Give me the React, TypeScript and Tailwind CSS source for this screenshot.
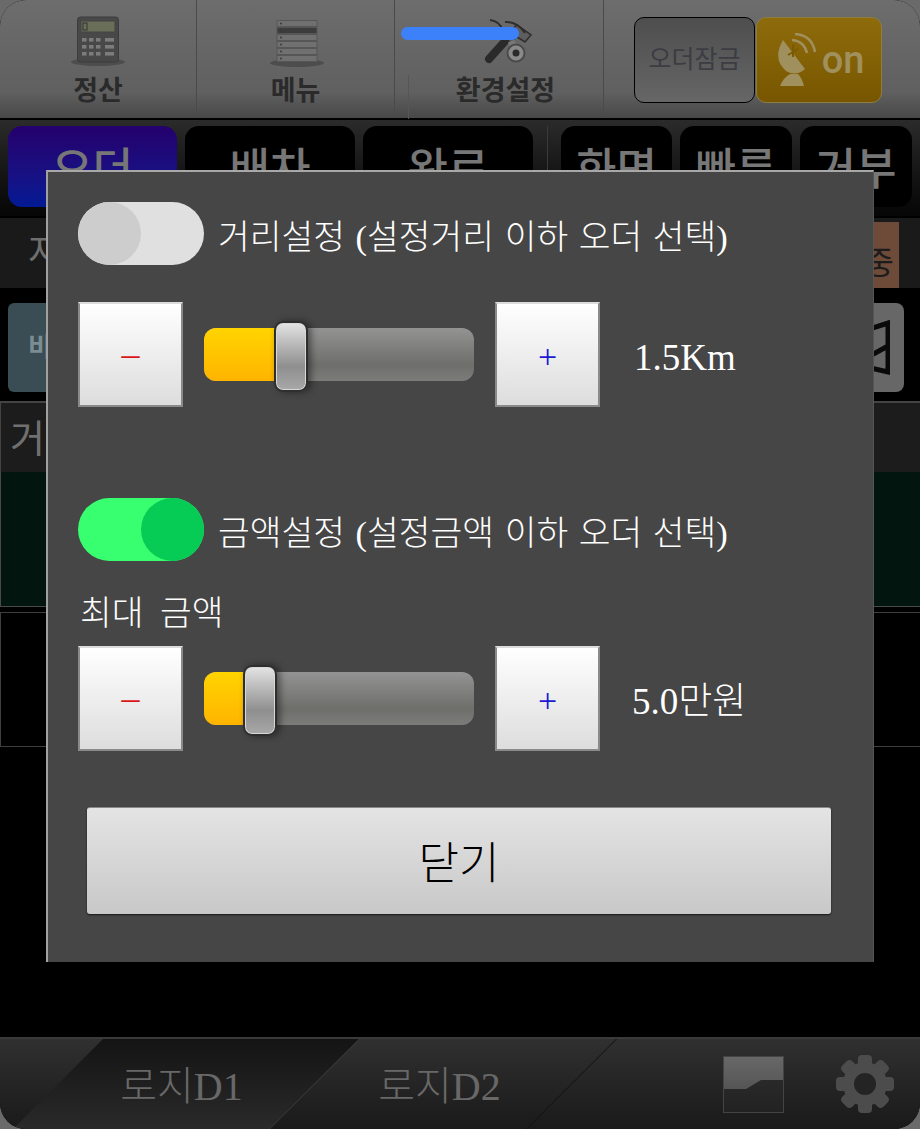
const serif = "font-['Liberation_Serif','Noto_Sans_CJK_KR',serif]"

function CalculatorIcon() {
  return (
    <svg width="80" height="60" viewBox="0 0 80 60">
      <ellipse cx="40" cy="49" rx="27" ry="4" fill="#3e3e3e" opacity="0.6" />
      <rect x="19.5" y="4" width="41" height="45" rx="3" fill="#484848" stroke="#3c3c3c" />
      <rect x="23" y="8" width="34" height="11" fill="#6a6f5a" stroke="#444" />
      <rect x="25" y="10" width="4" height="7" fill="none" stroke="#333" />
      {[0, 1, 2].map((r) =>
        [0, 1, 2].map((c) => <rect key={`${r}-${c}`} x={24 + c * 7} y={25 + r * 7} width="4.5" height="3.6" fill="#7c7c7c" />),
      )}
      {[0, 1, 2].map((r) => (
        <rect key={r} x="47" y={25 + r * 7} width="9" height="3.6" fill="#7c7c7c" />
      ))}
    </svg>
  )
}

function MenuIcon() {
  return (
    <svg width="80" height="60" viewBox="0 0 80 60">
      <ellipse cx="41" cy="50" rx="27" ry="4" fill="#3e3e3e" opacity="0.6" />
      {[0, 1, 2, 3, 4, 5].map((i) => (
        <g key={i}>
          <rect x="21" y={7.5 + i * 7} width="40" height="6" fill={i === 1 ? "#3c3c3c" : "#707070"} stroke="#565656" />
          <circle cx="25" cy={10.5 + i * 7} r="1" fill="#3a3a3a" />
        </g>
      ))}
    </svg>
  )
}

function ToolsIcon() {
  return (
    <svg width="70" height="60" viewBox="0 0 70 60">
      <path d="M18 46 L36 26" stroke="#2a2a2a" strokeWidth="8" strokeLinecap="round" />
      <path d="M34 22 L46 12 L60 22 L54 29 L46 24 L39 30 Z" fill="#5e5e5e" stroke="#2e2e2e" strokeWidth="1.5" />
      <path d="M19 7 Q29 8 32 18" fill="none" stroke="#2e2e2e" strokeWidth="2" />
      <path d="M34 9 Q46 8 54 20" fill="none" stroke="#2e2e2e" strokeWidth="2" />
      <path d="M40 28 L45 38" stroke="#777" strokeWidth="7" />
      <circle cx="45" cy="40" r="8.5" fill="#8a8a8a" stroke="#4a4a4a" strokeWidth="2" />
      <circle cx="45" cy="40" r="3.5" fill="#2a2a2a" />
    </svg>
  )
}

function DishIcon() {
  return (
    <svg width="44" height="54" viewBox="0 0 44 54">
      <path d="M9 7 Q-2 26 12 38 Q22 44 31 36 Z" fill="#a0905e" />
      <path d="M14 22 L24 16 M19 11 L19 24" stroke="#7c5a00" strokeWidth="2" />
      <path d="M18 7 Q30 8 33 20 M21 1 Q38 2 41 19" fill="none" stroke="#a0905e" strokeWidth="2.5" />
      <path d="M6 53 Q10 44 16 41 L24 41 Q28 45 30 53 Z" fill="#a0905e" />
    </svg>
  )
}

function GearIcon() {
  return (
    <svg width="60" height="58" viewBox="0 0 60 58">
      {[0, 45, 90, 135, 180, 225, 270, 315].map((a) => (
        <rect key={a} x="23" y="0" width="14" height="14" rx="4" fill="#4c4c4c" transform={`rotate(${a} 30 29)`} />
      ))}
      <circle cx="30" cy="29" r="22" fill="#4c4c4c" />
      <circle cx="30" cy="29" r="11" fill="#242424" />
    </svg>
  )
}

function ChartIcon() {
  return (
    <svg width="61" height="57" viewBox="0 0 61 57">
      <defs>
        <linearGradient id="chartTop" x1="0" y1="0" x2="0" y2="1">
          <stop offset="0" stopColor="#686868" />
          <stop offset="1" stopColor="#555555" />
        </linearGradient>
        <linearGradient id="chartBottom" x1="0" y1="0" x2="0" y2="1">
          <stop offset="0" stopColor="#2e2e2e" />
          <stop offset="1" stopColor="#222222" />
        </linearGradient>
      </defs>
      <rect x="0.5" y="0.5" width="60" height="56" fill="url(#chartBottom)" stroke="#444" />
      <path d="M1 1 H60 V24 H38 L23 33 H1 Z" fill="url(#chartTop)" />
    </svg>
  )
}

function TopItem({ label, className, children }: { label: string; className: string; children: React.ReactNode }) {
  return (
    <div className={`flex h-full flex-col items-center border-r border-[#4a4a4a] pt-[13px] ${className}`}>
      <div className="h-[60px]">{children}</div>
      <span className="font-['Noto_Sans_CJK_KR',sans-serif] text-[27px] leading-[32px] font-bold text-[#2a2a2a]">{label}</span>
    </div>
  )
}

function TopTab({ label, className }: { label: string; className: string }) {
  return (
    <div className={`flex h-[81px] justify-center overflow-hidden rounded-[14px] pt-[15px] text-[44px] leading-[60px] font-medium whitespace-nowrap text-[#777] ${serif} ${className}`}>
      {label}
    </div>
  )
}

function StepButton({ kind }: { kind: "minus" | "plus" }) {
  return (
    <div className={`flex h-[105px] w-[105px] shrink-0 items-center justify-center border-2 border-[#8a8a8a] border-t-[#dcdcdc] bg-gradient-to-b from-white to-[#dddddd] ${serif} ${kind === "minus" ? "pb-[2px] text-[36px] text-[#d81818]" : "pt-[4px] text-[34px] text-[#1a1ad0]"}`}>
      {kind === "minus" ? "–" : "+"}
    </div>
  )
}

function Slider({ fill, thumb }: { fill: string; thumb: string }) {
  return (
    <div className="relative h-[53px] w-[270px] shrink-0 rounded-[12px] bg-gradient-to-b from-[#939393] via-[#6e6f6b] via-[70%] to-[#7c7c7a]">
      <div className={`h-full rounded-l-[12px] bg-gradient-to-b from-[#ffd400] to-[#ffb400] ${fill}`} />
      <div className={`absolute top-[-7px] h-[71px] w-[34px] rounded-[9px] border-2 border-[#2e2e2e] bg-gradient-to-b from-[#e4e4e4] via-[#8f8f8f] via-[65%] to-[#a8a8a8] shadow-[inset_0_0_0_1px_#d8d8d8,3px_0_7px_rgba(0,0,0,0.45)] ${thumb}`} />
    </div>
  )
}

function Toggle({ on, label }: { on: boolean; label: string }) {
  return (
    <div className="flex items-center gap-[14px]">
      <div className={`flex h-[63px] w-[126px] shrink-0 rounded-full ${on ? "justify-end bg-[#38ff70]" : "bg-[#e0e0e0]"}`}>
        <div className={`h-[63px] w-[63px] rounded-full ${on ? "bg-[#06cc55]" : "bg-[#cdcdcd]"}`} />
      </div>
      <span className={`pt-[6px] text-[34.5px] leading-[44px] font-light whitespace-nowrap text-white [word-spacing:2px] ${serif}`}>{label}</span>
    </div>
  )
}

function StepRow({ fill, thumb, value, className, valueClass }: { fill: string; thumb: string; value: string; className: string; valueClass: string }) {
  return (
    <div className={`flex items-center ${className}`}>
      <StepButton kind="minus" />
      <div className="mx-[21px]">
        <Slider fill={fill} thumb={thumb} />
      </div>
      <StepButton kind="plus" />
      <span className={`pt-[6px] text-[37px] font-light whitespace-nowrap text-white ${serif} ${valueClass}`}>{value}</span>
    </div>
  )
}

export default function App() {
  return (
    <div className="relative h-[1129px] w-[920px] overflow-hidden bg-[#6a6a6a]">
      <div className="flex h-full flex-col overflow-hidden rounded-[26px] bg-black">
        {/* Top menu */}
        <div className="flex h-[120px] shrink-0 items-stretch border-b-2 border-black bg-gradient-to-b from-[#6d6d6d] via-[#606060] via-[78%] to-[#484848]">
          <TopItem label="정산" className="w-[197px]"><CalculatorIcon /></TopItem>
          <TopItem label="메뉴" className="w-[198px]"><MenuIcon /></TopItem>
          <TopItem label="환경설정" className="w-[209px] pl-[13px]"><ToolsIcon /></TopItem>
          <div className="flex items-start pt-[17px] pl-[30px]">
            <div className={`flex h-[86px] w-[121px] items-center justify-center rounded-[10px] border border-black bg-gradient-to-b from-[#4e4e4e] to-[#666] text-[25px] text-[#3c3c44] ${serif}`}>
              오더잠금
            </div>
            <div className="ml-[1px] flex h-[86px] w-[126px] items-center justify-center gap-[4px] rounded-[10px] border border-[#8e7c40] bg-gradient-to-b from-[#8e6c0c] to-[#785600]">
              <DishIcon />
              <span className="font-['Roboto',sans-serif] text-[38px] leading-none font-medium text-[#a0905e]">on</span>
            </div>
          </div>
        </div>

        {/* Tabs */}
        <div className="flex h-[96px] shrink-0 items-start bg-gradient-to-b from-[#2b2b2b] to-[#060606] pt-[6px] pl-[8px]">
          <TopTab label="오더" className="w-[169px] bg-gradient-to-b from-[#24006c] to-[#001a94]" />
          <TopTab label="배차" className="ml-[8px] w-[170px] bg-black" />
          <TopTab label="완료" className="ml-[8px] w-[170px] bg-black" />
          <div className="ml-[14px] h-[88px] w-px bg-[#3a3a3a]" />
          <TopTab label="화면" className="ml-[13px] w-[111px] bg-black" />
          <TopTab label="빠른" className="ml-[8px] w-[112px] bg-black" />
          <TopTab label="거부" className="ml-[8px] w-[112px] bg-black" />
        </div>

        {/* Filter row */}
        <div className="mt-[2px] flex h-[70px] shrink-0 items-center justify-between bg-[#1a1a1a] pl-[28px] pr-[21px]">
          <span className={`text-[36px] text-[#6e6e6e] ${serif}`}>저</span>
          <div className={`mt-[4px] flex h-[66px] w-[60px] items-end justify-end bg-[#6e4a38] pr-[5px] text-[32px] leading-[50px] text-[#1c1c1c] ${serif}`}>
            중
          </div>
        </div>

        {/* Action row */}
        <div className="mt-[15px] flex h-[89px] shrink-0 items-stretch justify-between px-[8px] pr-[16px]">
          <div className={`flex w-[120px] items-center rounded-[6px] bg-[#3a4c54] pl-[20px] text-[26px] font-bold text-[#7c8c92] ${serif}`}>
            비
          </div>
          <div className="flex w-[90px] items-center justify-end rounded-[8px] bg-[#676767] pr-[14px]">
            <svg width="24" height="56" viewBox="0 0 24 56" fill="none" stroke="#0a0a0a" strokeWidth="5">
              <path d="M0 10 L22 3 V52 L0 47 M22 26 L0 38" />
            </svg>
          </div>
        </div>

        {/* Order list */}
        <div className="mt-[9px] flex h-[71px] shrink-0 items-center border-t-2 border-l border-[#444] bg-[#1c1c1c] pt-[4px] pl-[9px]">
          <span className={`text-[38px] text-[#707070] ${serif}`}>거</span>
        </div>
        <div className="h-[135px] shrink-0 border-b border-l border-[#4a4a4a] bg-[#03150f]" />
        <div className="mt-[5px] h-[135px] shrink-0 border-y border-l border-[#3e3e3e] bg-black" />

        {/* Bottom tabs */}
        <div className="mt-auto flex h-[92px] shrink-0 items-stretch border-t-2 border-[#3a3a3a] bg-gradient-to-b from-[#303030] to-[#1a1a1a] pl-[58px]">
          <div className="relative flex w-[257px] items-center justify-center pt-[6px] pr-[10px]">
            <div className="absolute inset-0 -skew-x-[45deg] border-r border-[#3c3c3c] bg-gradient-to-b from-[#141414] to-[#2a2a2a]" />
            <span className={`relative text-[40px] font-light text-[#686868] ${serif}`}>로지D1</span>
          </div>
          <div className="relative flex w-[257px] items-center justify-center pt-[6px] pr-[8px]">
            <div className="absolute inset-0 -skew-x-[45deg] border-r border-[#111]" />
            <span className={`relative text-[40px] font-light text-[#686868] ${serif}`}>로지D2</span>
          </div>
          <div className="ml-auto flex items-center gap-[51px] pr-[25px]">
            <ChartIcon />
            <GearIcon />
          </div>
        </div>
      </div>

      {/* Faint second line in the settings cell */}
      <div className="absolute top-[75px] left-[408px] h-[44px] w-px bg-[#565656]" />

      {/* Blue status bar over the menu */}
      <div className="absolute top-[27px] left-[401px] h-[13px] w-[118px] rounded-full bg-[#3c80fa]" />

      {/* Settings dialog */}
      <div className="absolute top-[170px] left-[46px] h-[792px] w-[828px] border-t-2 border-r border-l-2 border-t-[#a8a8a8] border-r-[#555] border-l-[#a0a0a0] bg-[#464646] pt-[30px] pl-[30px]">
        <Toggle on={false} label="거리설정 (설정거리 이하 오더 선택)" />
        <StepRow fill="w-[76px]" thumb="left-[70px]" value="1.5Km" valueClass="ml-[34px]" className="mt-[37px]" />
        <div className="mt-[91px]">
          <Toggle on label="금액설정 (설정금액 이하 오더 선택)" />
        </div>
        <p className={`mt-[28px] ml-[2px] pt-[3px] text-[34.5px] leading-[43px] font-light text-white [word-spacing:8px] ${serif}`}>최대 금액</p>
        <StepRow fill="w-[42px]" thumb="left-[39px]" value="5.0만원" valueClass="ml-[32px]" className="mt-[11px]" />
        <div className={`mt-[56px] ml-[9px] flex h-[107px] w-[744px] items-center justify-center rounded-[3px] border-t border-[#8a8a8a] bg-gradient-to-b from-[#e4e4e4] to-[#c8c8c8] pt-[8px] text-[44px] font-light text-black shadow-[0_1px_2px_rgba(0,0,0,0.7)] ${serif}`}>
          닫기
        </div>
      </div>
    </div>
  )
}
